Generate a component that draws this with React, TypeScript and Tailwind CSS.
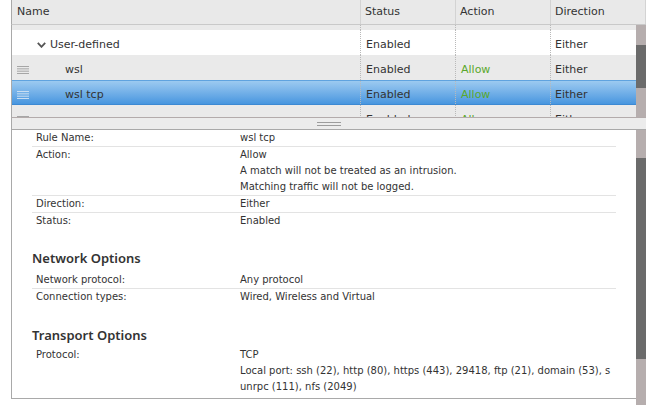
import React from "react";

const Grip = ({ color }: { color: string }) => (
  <svg width="12" height="9" viewBox="0 0 12 9" className="shrink-0">
    <g stroke={color} strokeWidth="1">
      <line x1="0" y1="0.5" x2="12" y2="0.5" />
      <line x1="0" y1="2.85" x2="12" y2="2.85" />
      <line x1="0" y1="5.2" x2="12" y2="5.2" />
      <line x1="0" y1="7.5" x2="12" y2="7.5" />
    </g>
  </svg>
);

const Chevron = () => (
  <svg width="9" height="6" viewBox="0 0 9 6" className="shrink-0">
    <path d="M0.8 0.8 L4.5 4.8 L8.2 0.8" fill="none" stroke="#555" strokeWidth="1.8" />
  </svg>
);

type RowProps = {
  bg: string;
  name: React.ReactNode;
  status: string;
  action: string;
  direction: string;
  grip?: string;
  h?: string;
};

const BodyRow = ({ bg, name, status, action, direction, grip, h }: RowProps) => (
  <div className={`grid grid-cols-[349px_95px_95px_95px] shrink-0 ${h ?? "h-[25px]"} ${bg}`}>
    <div className="flex items-center border-r border-dotted border-[#b9b9b9] pl-[5px] pt-[5px]">
      {grip ? <Grip color={grip} /> : <div className="w-[12px]" />}
      {name}
    </div>
    <div className="flex items-center border-r border-dotted border-[#b9b9b9] pl-[5px] pt-[5px]">{status}</div>
    <div className="flex items-center border-r border-dotted border-[#b9b9b9] pl-[5px] pt-[5px] text-[#5aa82c]">{action}</div>
    <div className="flex items-center pl-[4px] pt-[5px]">{direction}</div>
  </div>
);

const DRow = ({ label, values, border = true }: { label: string; values: string[]; border?: boolean }) => (
  <div className={`flex leading-[16px] ${border ? "border-b border-[#e3e3e3]" : ""}`}>
    <div className="w-[208px] pl-[4px] shrink-0">{label}</div>
    <div className="flex-1">
      {values.map((v, i) => (
        <div key={i} className="whitespace-nowrap">{v}</div>
      ))}
    </div>
  </div>
);

const Heading = ({ children }: { children: React.ReactNode }) => (
  <div className="font-['Noto_Sans',sans-serif] font-semibold text-[13px] leading-[20px] text-[#333]">{children}</div>
);

export default function App() {
  return (
    <div className="w-[653px] h-[405px] bg-white overflow-hidden font-['DejaVu_Sans',sans-serif] text-[#333]">
      <div className="ml-[11px] w-[635px] flex flex-col">
        {/* header */}
        <div className="h-[25px] flex border-l border-[#a9a9a9] border-b border-b-[#c9c9c9] bg-[#e9e9e9] text-[11px]">
          <div className="w-[349px] border-r border-[#d3d3d3] pl-[5px] flex items-center">Name</div>
          <div className="w-[95px] border-r border-[#d3d3d3] pl-[4px] flex items-center">Status</div>
          <div className="w-[95px] border-r border-[#d3d3d3] pl-[4px] flex items-center">Action</div>
          <div className="w-[95px] border-r border-[#d3d3d3] pl-[4px] flex items-center">Direction</div>
        </div>
        {/* body */}
        <div className="h-[92px] flex">
          <div className="flex-1 border-l border-[#a9a9a9] overflow-hidden flex flex-col text-[11px]">
            <BodyRow bg="bg-[#eaeaea]" h="h-[5px]" name="" status="" action="" direction="" />
            <BodyRow
              bg="bg-white"
              name={
                <div className="flex items-center ml-[8px] gap-[4px]">
                  <Chevron />
                  <span>User-defined</span>
                </div>
              }
              status="Enabled"
              action=""
              direction="Either"
            />
            <BodyRow bg="bg-[#eaeaea]" grip="#a6a6a6" name={<span className="ml-[36px]">wsl</span>} status="Enabled" action="Allow" direction="Either" />
            <BodyRow
              bg="bg-gradient-to-b from-[#9ccaf0] to-[#4796df] border-t border-b border-t-[#5fa3df] border-b-[#3c89d3]"
              grip="#c9def2"
              name={<span className="ml-[36px]">wsl tcp</span>}
              status="Enabled"
              action="Allow"
              direction="Either"
            />
            <BodyRow bg="bg-[#eaeaea]" grip="#a6a6a6" name="" status="Enabled" action="Allow" direction="Either" />
          </div>
          <div className="w-[10px] bg-[#b6aeae] flex flex-col">
            <div className="h-[20px]" />
            <div className="h-[43px] bg-[#6b6b6b]" />
          </div>
        </div>
        {/* splitter */}
        <div className="h-[13px] border-t border-b border-t-[#b3abab] border-b-[#a9a9a9] border-l border-l-[#a9a9a9] bg-[#ececec] flex flex-col items-center justify-center gap-[2px]">
          <div className="w-[24px] h-px bg-[#9c9c9c]" />
          <div className="w-[24px] h-px bg-[#9c9c9c]" />
        </div>
        {/* details */}
        <div className="h-[275px] flex items-start">
          <div className="flex-1 h-[269px] border-l border-b border-[#a9a9a9] bg-white px-[20px] text-[10px]">
            <DRow label="Rule Name:" values={["wsl tcp"]} />
            <DRow
              label="Action:"
              values={["Allow", "A match will not be treated as an intrusion.", "Matching traffic will not be logged."]}
            />
            <DRow label="Direction:" values={["Either"]} />
            <DRow label="Status:" values={["Enabled"]} border={false} />
            <div className="mt-[19px] mb-[4px]">
              <Heading>Network Options</Heading>
            </div>
            <DRow label="Network protocol:" values={["Any protocol"]} />
            <DRow label="Connection types:" values={["Wired, Wireless and Virtual"]} border={false} />
            <div className="mt-[20px] mb-[2px]">
              <Heading>Transport Options</Heading>
            </div>
            <DRow
              label="Protocol:"
              values={[
                "TCP",
                "Local port: ssh (22), http (80), https (443), 29418, ftp (21), domain (53), s",
                "unrpc (111), nfs (2049)",
              ]}
              border={false}
            />
          </div>
          <div className="w-[10px] h-[275px] bg-[#b6aeae] flex flex-col">
            <div className="h-[28px]" />
            <div className="h-[201px] bg-[#6b6b6b]" />
          </div>
        </div>
      </div>
    </div>
  );
}
